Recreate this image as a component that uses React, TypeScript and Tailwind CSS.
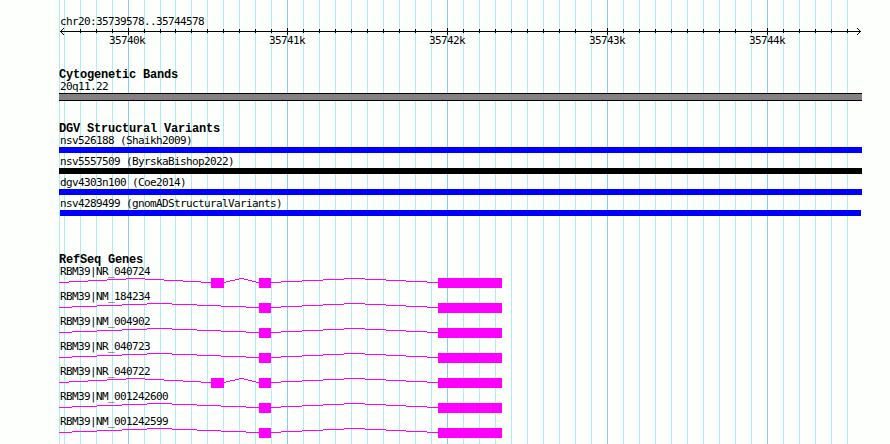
import React from "react";

const LEFT = 59;

const gridLines: number[] = [
  59,
  ...Array.from({ length: 7 }, (_, i) => 64 + i * 16),
  ...Array.from({ length: 43 }, (_, i) => 175 + i * 16),
];
const majors = [128, 287, 447, 607, 767];
const ticks = gridLines.filter((x) => x >= 80);

const variants = [
  { name: "nsv526188 (Shaikh2009)", bar: "bg-[#0000ff]" },
  { name: "nsv5557509 (ByrskaBishop2022)", bar: "bg-black" },
  { name: "dgv4303n100 (Coe2014)", bar: "bg-[#0000ff]" },
  { name: "nsv4289499 (gnomADStructuralVariants)", bar: "bg-[#0000ff] mx-px" },
];

const genes = [
  { name: "RBM39|NR_040724", extraExon: true },
  { name: "RBM39|NM_184234", extraExon: false },
  { name: "RBM39|NM_004902", extraExon: false },
  { name: "RBM39|NR_040723", extraExon: false },
  { name: "RBM39|NR_040722", extraExon: true },
  { name: "RBM39|NM_001242600", extraExon: false },
  { name: "RBM39|NM_001242599", extraExon: false },
];

// Each intron rises four steps to its middle and falls back again.
const introns = {
  first: [59, 69, 88, 107, 126, 145, 164, 183, 201, 211],
  hump: [224, 226, 230, 235, 239, 244, 248, 252, 256, 259],
  long: [59, 72, 97, 122, 147, 172, 197, 221, 246, 259],
  last: [271, 281, 302, 323, 344, 365, 386, 406, 427, 438],
};

function Intron({ steps }: { steps: number[] }) {
  return (
    <>
      {steps.slice(0, -1).map((x, i) => (
        <rect key={x} x={x - LEFT} y={Math.abs(4 - i)} width={steps[i + 1] - x} height="1" />
      ))}
    </>
  );
}

function Gene({ extraExon }: { extraExon: boolean }) {
  return (
    <svg width="803" height="10" className="mt-px mb-0.5 block shrink-0" fill="#ff00ff" shapeRendering="crispEdges">
      {extraExon ? (
        <>
          <Intron steps={introns.first} />
          <rect x="152" y="0" width="13" height="10" />
          <Intron steps={introns.hump} />
        </>
      ) : (
        <Intron steps={introns.long} />
      )}
      <rect x="200" y="0" width="12" height="10" />
      <Intron steps={introns.last} />
      <rect x="379" y="0" width="64" height="10" />
    </svg>
  );
}

function Label({ children }: { children: React.ReactNode }) {
  return <div className="h-3 pl-px whitespace-pre">{children}</div>;
}

function Heading({ children }: { children: React.ReactNode }) {
  return (
    <h2 className="h-3 font-['Liberation_Mono',monospace] text-[12px] leading-[14px] font-bold tracking-[-0.2px] whitespace-pre">
      {children}
    </h2>
  );
}

export default function App() {
  return (
    <main className="relative h-[444px] w-[890px] overflow-hidden bg-[#fdfffc] font-['DejaVu_Sans_Mono',monospace] text-[11px] leading-[14px] tracking-[-0.622px] text-black">
      <svg width="890" height="444" className="absolute inset-0" shapeRendering="crispEdges">
        {gridLines.map((x) => (
          <rect key={x} x={x} y="0" width="1" height="444" fill={majors.includes(x) ? "#87ceeb" : "#afeeee"} />
        ))}
      </svg>
      <div className="relative ml-[59px] flex w-[803px] flex-col pt-[15px]">
        <Label>chr20:35739578..35744578</Label>
        <svg width="803" height="8" className="block" shapeRendering="crispEdges">
          <rect x="1" y="4" width="801" height="1" />
          {ticks.map((x) =>
            majors.includes(x) ? (
              <rect key={x} x={x - LEFT} y="1" width="1" height="7" />
            ) : (
              <rect key={x} x={x - LEFT} y="2" width="1" height="4" />
            ),
          )}
          {[1, 2, 3].map((d) => (
            <g key={d}>
              <rect x={1 + d} y={4 - d} width="1" height="1" />
              <rect x={1 + d} y={4 + d} width="1" height="1" />
              <rect x={801 - d} y={4 - d} width="1" height="1" />
              <rect x={801 - d} y={4 + d} width="1" height="1" />
            </g>
          ))}
        </svg>
        <div className="-mt-px flex h-3 pl-[50px]">
          {["35740k", "35741k", "35742k", "35743k", "35744k"].map((t) => (
            <span key={t} className="w-40 shrink-0">
              {t}
            </span>
          ))}
        </div>

        <section className="mt-[22px]">
          <Heading>Cytogenetic Bands</Heading>
          <Label>20q11.22</Label>
          <div className="mt-px h-2 border-y border-black bg-[#848084]" />
        </section>

        <section className="mt-[21px]">
          <Heading>DGV Structural Variants</Heading>
          {variants.map((v) => (
            <div key={v.name} className="mb-0.5">
              <Label>{v.name}</Label>
              <div className="pt-px">
                <div className={`h-1.5 ${v.bar}`} />
              </div>
            </div>
          ))}
        </section>

        <section className="mt-[35px]">
          <Heading>RefSeq Genes</Heading>
          {genes.map((g) => (
            <div key={g.name}>
              <Label>{g.name}</Label>
              <Gene extraExon={g.extraExon} />
            </div>
          ))}
        </section>
      </div>
    </main>
  );
}
